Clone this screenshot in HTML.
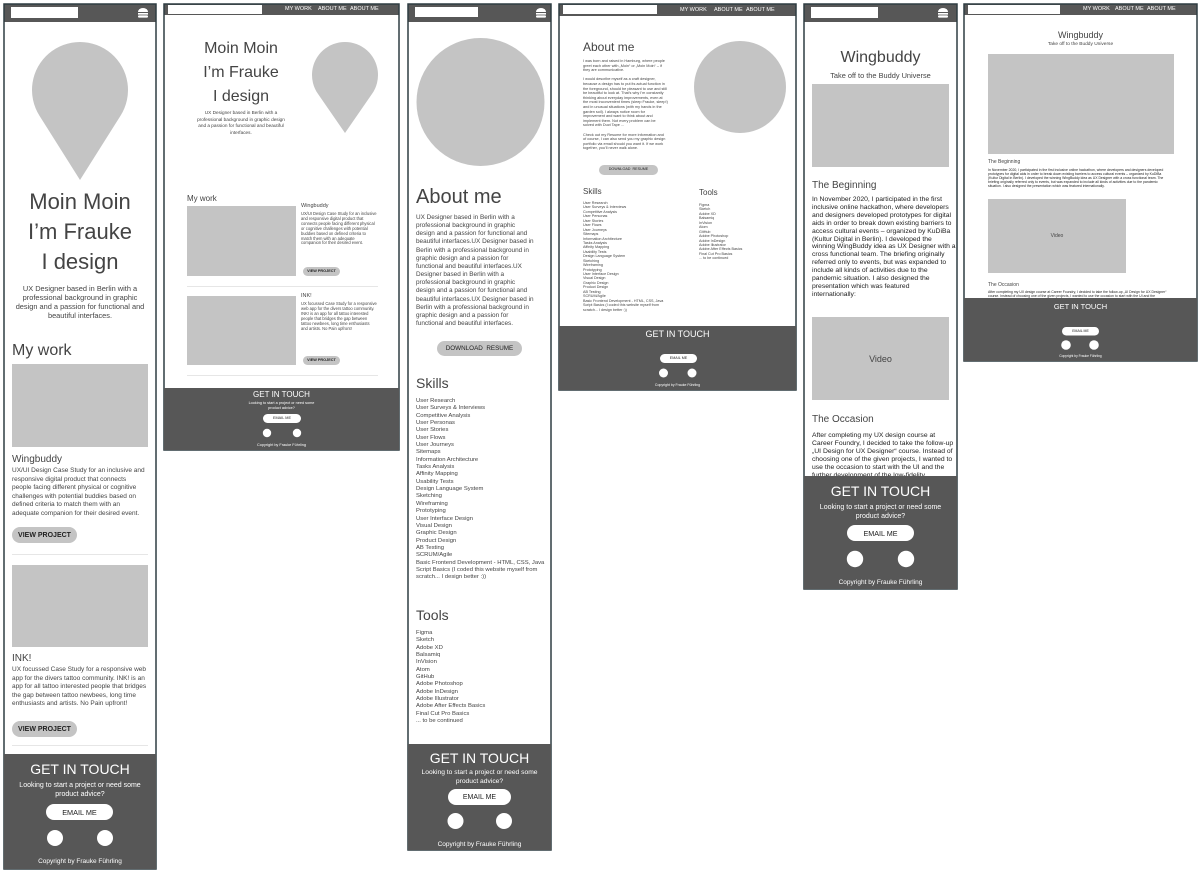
<!DOCTYPE html>
<html><head><meta charset="utf-8">
<style>
*{margin:0;padding:0;box-sizing:border-box}
body{width:1200px;height:872px;background:#fff;position:relative;overflow:hidden;font-family:"Liberation Sans",sans-serif;color:#444}
.t{position:absolute;white-space:nowrap;line-height:1}
.c{text-align:center}
.f{position:absolute;background:#575757;z-index:2}
.w{color:#fff;z-index:3}
.b{font-weight:bold}
svg.bg{position:absolute;left:0;top:0;z-index:0}
.t{z-index:1}
.w.t{z-index:3}
.k{color:#222}
</style></head><body>
<svg class="bg" width="1200" height="872" viewBox="0 0 1200 872">
<g fill="#c4c4c4">
<path d="M80 180 L39.4 115.6 A48 48 0 1 1 120.6 115.6 Z"/>
<rect x="12" y="364" width="136" height="83"/>
<rect x="12" y="565" width="136" height="82"/>
<rect x="12" y="527" width="65" height="16" rx="8"/>
<rect x="12" y="721" width="65" height="16" rx="8"/>
<path d="M345 133 L317.9 93.8 A33 33 0 1 1 372.1 93.8 Z"/>
<rect x="187" y="206" width="109" height="70"/>
<rect x="187" y="296" width="109" height="69"/>
<rect x="303" y="267" width="37" height="9" rx="4.5"/>
<rect x="303" y="356" width="37" height="9" rx="4.5"/>
<circle cx="480.5" cy="102" r="64"/>
<rect x="437" y="341" width="85" height="15" rx="7.5"/>
<circle cx="740" cy="87" r="46"/>
<rect x="599" y="165" width="59" height="10" rx="5"/>
<rect x="812" y="84" width="137" height="83"/>
<rect x="812" y="317" width="137" height="83"/>
<rect x="988" y="54" width="186" height="100"/>
<rect x="988" y="199" width="138" height="74"/>
</g>
<g stroke="#e6e6e6" stroke-width="1">
<line x1="12" y1="554.5" x2="148" y2="554.5"/>
<line x1="12" y1="745.5" x2="148" y2="745.5"/>
<line x1="187" y1="286.5" x2="378" y2="286.5"/>
<line x1="187" y1="375.5" x2="378" y2="375.5"/>
</g>
<g fill="#575757">
<rect x="4" y="4" width="152" height="18"/>
<rect x="164" y="4" width="235" height="11"/>
<rect x="408" y="4" width="143" height="18"/>
<rect x="559" y="4" width="237" height="12"/>
<rect x="804" y="4" width="153" height="18"/>
<rect x="964" y="4" width="233" height="11"/>
</g>
<g fill="#fff">
<rect x="11" y="7" width="67" height="11"/>
<rect x="168" y="5" width="94" height="9"/>
<rect x="415" y="7" width="63" height="10"/>
<rect x="563" y="5" width="94" height="9"/>
<rect x="811" y="7" width="67" height="11"/>
<rect x="968" y="5" width="92" height="9"/>
</g>
<g fill="#fff">
<g transform="translate(138,8)"><path d="M0 4 A5 4 0 0 1 10 4 Z"/><rect x="0" y="5" width="10" height="1.6"/><rect x="0" y="7.4" width="10" height="2.2" rx="1"/></g>
<g transform="translate(536,8)"><path d="M0 4 A5 4 0 0 1 10 4 Z"/><rect x="0" y="5" width="10" height="1.6"/><rect x="0" y="7.4" width="10" height="2.2" rx="1"/></g>
<g transform="translate(938,8)"><path d="M0 4 A5 4 0 0 1 10 4 Z"/><rect x="0" y="5" width="10" height="1.6"/><rect x="0" y="7.4" width="10" height="2.2" rx="1"/></g>
</g>
<g fill="none" stroke="#2f3d42" stroke-width="1.5">
<rect x="4" y="4" width="152" height="865"/>
<rect x="164" y="4" width="235" height="446"/>
<rect x="408" y="4" width="143" height="846"/>
<rect x="559" y="4" width="237" height="386"/>
<rect x="804" y="4" width="153" height="585"/>
<rect x="964" y="4" width="233" height="357"/>
</g>
</svg>

<div class="t w" style="left:285px;top:7px;font-size:5.5px">MY WORK</div>
<div class="t w" style="left:318px;top:7px;font-size:5.5px">ABOUT ME</div>
<div class="t w" style="left:350px;top:7px;font-size:5.5px">ABOUT ME</div>
<div class="t w" style="left:680px;top:7.5px;font-size:5.5px">MY WORK</div>
<div class="t w" style="left:714px;top:7.5px;font-size:5.5px">ABOUT ME</div>
<div class="t w" style="left:746px;top:7.5px;font-size:5.5px">ABOUT ME</div>
<div class="t w" style="left:1083px;top:7px;font-size:5.5px">MY WORK</div>
<div class="t w" style="left:1115px;top:7px;font-size:5.5px">ABOUT ME</div>
<div class="t w" style="left:1147px;top:7px;font-size:5.5px">ABOUT ME</div>

<!-- FRAME 1 -->
<div class="t c" style="left:4px;width:152px;top:187px;font-size:22px;line-height:30px">Moin Moin<br>I’m Frauke<br>I design</div>
<div class="t c" style="left:4px;width:152px;top:283.5px;font-size:7.4px;line-height:9px">UX Designer based in Berlin with a<br>professional background in graphic<br>design and a passion for functional and<br>beautiful interfaces.</div>
<div class="t" style="left:12px;top:343px;font-size:16px">My work</div>
<div class="t" style="left:12px;top:455px;font-size:10px">Wingbuddy</div>
<div class="t" style="left:12px;top:467px;font-size:6.5px;line-height:8.6px">UX/UI Design Case Study for an inclusive and<br>responsive digital product that connects<br>people facing different physical or cognitive<br>challenges with potential buddies based on<br>defined criteria to match them with an<br>adequate companion for their desired event.</div>
<div class="t c b" style="left:12px;width:65px;top:531.5px;font-size:7px;color:#222">VIEW PROJECT</div>
<div class="t" style="left:12px;top:654px;font-size:10px">INK!</div>
<div class="t" style="left:12px;top:666px;font-size:6.5px;line-height:8.6px">UX focussed Case Study for a responsive web<br>app for the divers tattoo community. INK! is an<br>app for all tattoo interested people that bridges<br>the gap between tattoo newbees, long time<br>enthusiasts and artists. No Pain upfront!</div>
<div class="t c b" style="left:12px;width:65px;top:725.5px;font-size:7px;color:#222">VIEW PROJECT</div>
<div class="f" style="left:4px;top:754px;width:152px;height:115px"></div>
<div class="t c w" style="left:4px;width:152px;top:762px;font-size:14px">GET IN TOUCH</div>
<div class="t c w" style="left:4px;width:152px;top:781px;font-size:7px;line-height:9px">Looking to start a project or need some<br>product advice?</div>
<svg style="position:absolute;left:0;top:0;z-index:3" width="160" height="872"><rect x="46" y="804" width="67" height="16" rx="8" fill="#fff"/><circle cx="55" cy="838" r="8" fill="#fff"/><circle cx="105" cy="838" r="8" fill="#fff"/></svg>
<div class="t c" style="left:46px;width:67px;top:808.5px;font-size:7.3px;color:#222;z-index:4">EMAIL ME</div>
<div class="t c w" style="left:4px;width:152px;top:858.5px;font-size:6.5px">Copyright by Frauke Führling</div>

<!-- FRAME 2 -->
<div class="t c" style="left:185px;width:112px;top:37px;font-size:16px;line-height:24px">Moin Moin<br>I’m Frauke<br>I design</div>
<div class="t c" style="left:185px;width:112px;top:110px;font-size:4.7px;line-height:6.5px">UX Designer based in Berlin with a<br>professional background in graphic design<br>and a passion for functional and beautiful<br>interfaces.</div>
<div class="t" style="left:187px;top:195px;font-size:8px">My work</div>
<div class="t" style="left:301px;top:204px;font-size:5.5px">Wingbuddy</div>
<div class="t" style="left:301px;top:212px;font-size:4.1px;line-height:4.9px">UX/UI Design Case Study for an inclusive<br>and responsive digital product that<br>connects people facing different physical<br>or cognitive challenges with potential<br>buddies based on defined criteria to<br>match them with an adequate<br>companion for their desired event.</div>
<div class="t c b" style="left:303px;width:37px;top:269.5px;font-size:3.8px;color:#222">VIEW PROJECT</div>
<div class="t" style="left:301px;top:294px;font-size:5.5px">INK!</div>
<div class="t" style="left:301px;top:302px;font-size:4.1px;line-height:4.9px">UX focussed Case Study for a responsive<br>web app for the divers tattoo community.<br>INK! is an app for all tattoo interested<br>people that bridges the gap between<br>tattoo newbees, long time enthusiasts<br>and artists. No Pain upfront!</div>
<div class="t c b" style="left:303px;width:37px;top:358.5px;font-size:3.8px;color:#222">VIEW PROJECT</div>
<div class="f" style="left:164px;top:388px;width:235px;height:62px"></div>
<div class="t c w" style="left:164px;width:235px;top:391px;font-size:8px">GET IN TOUCH</div>
<div class="t c w" style="left:164px;width:235px;top:401px;font-size:3.8px;line-height:5px">Looking to start a project or need some<br>product advice?</div>
<svg style="position:absolute;left:160px;top:380px;z-index:3" width="240" height="70"><rect x="103" y="34" width="38" height="9" rx="4.5" fill="#fff"/><circle cx="107" cy="53" r="4.2" fill="#fff"/><circle cx="137" cy="53" r="4.2" fill="#fff"/></svg>
<div class="t c" style="left:263px;width:38px;top:416.5px;font-size:3.8px;color:#222;z-index:4">EMAIL ME</div>
<div class="t c w" style="left:164px;width:235px;top:444px;font-size:3.8px">Copyright by Frauke Führling</div>

<!-- FRAME 3 -->
<div class="t" style="left:416px;top:187px;font-size:20px">About me</div>
<div class="t" style="left:416px;top:214px;font-size:6.4px;line-height:8.15px">UX Designer based in Berlin with a<br>professional background in graphic<br>design and a passion for functional and<br>beautiful interfaces.UX Designer based in<br>Berlin with a professional background in<br>graphic design and a passion for<br>functional and beautiful interfaces.UX<br>Designer based in Berlin with a<br>professional background in graphic<br>design and a passion for functional and<br>beautiful interfaces.UX Designer based in<br>Berlin with a professional background in<br>graphic design and a passion for<br>functional and beautiful interfaces.</div>
<div class="t c" style="left:437px;width:85px;top:345.5px;font-size:6.3px;color:#222">DOWNLOAD&nbsp; RESUME</div>
<div class="t" style="left:416px;top:376px;font-size:14px">Skills</div>
<div class="t" style="left:416px;top:398px;font-size:5.9px;line-height:7.35px">User Research<br>User Surveys &amp; Interviews<br>Competitive Analysis<br>User Personas<br>User Stories<br>User Flows<br>User Journeys<br>Sitemaps<br>Information Architecture<br>Tasks Analysis<br>Affinity Mapping<br>Usability Tests<br>Design Language System<br>Sketching<br>Wireframing<br>Prototyping<br>User Interface Design<br>Visual Design<br>Graphic Design<br>Product Design<br>AB Testing<br>SCRUM/Agile<br>Basic Frontend Development - HTML, CSS, Java<br>Script Basics (I coded this website myself from<br>scratch... I design better :))</div>
<div class="t" style="left:416px;top:608px;font-size:14px">Tools</div>
<div class="t" style="left:416px;top:630px;font-size:5.9px;line-height:7.35px">Figma<br>Sketch<br>Adobe XD<br>Balsamiq<br>InVision<br>Atom<br>GitHub<br>Adobe Photoshop<br>Adobe InDesign<br>Adobe Illustrator<br>Adobe After Effects Basics<br>Final Cut Pro Basics<br>... to be continued</div>
<div class="f" style="left:408px;top:744px;width:143px;height:106px"></div>
<div class="t c w" style="left:408px;width:143px;top:751px;font-size:14px">GET IN TOUCH</div>
<div class="t c w" style="left:408px;width:143px;top:769px;font-size:6.7px;line-height:8.5px">Looking to start a project or need some<br>product advice?</div>
<svg style="position:absolute;left:400px;top:780px;z-index:3" width="160" height="60"><rect x="48" y="9" width="63" height="16" rx="8" fill="#fff"/><circle cx="55.5" cy="41" r="8" fill="#fff"/><circle cx="104" cy="41" r="8" fill="#fff"/></svg>
<div class="t c" style="left:448px;width:63px;top:793.5px;font-size:7px;color:#222;z-index:4">EMAIL ME</div>
<div class="t c w" style="left:408px;width:143px;top:841.5px;font-size:6.5px">Copyright by Frauke Führling</div>

<!-- FRAME 4 -->
<div class="t" style="left:583px;top:41px;font-size:12px">About me</div>
<div class="t" style="left:583px;top:59px;font-size:3.8px;line-height:4.6px">I was born and raised in Hamburg, where people<br>greet each other with „Moin“ or „Moin Moin“ – if<br>they are communicative.<br><br>I would describe myself as a craft designer,<br>because a design has to put its actual function in<br>the foreground, should be pleasant to use and still<br>be beautiful to look at. That’s why I’m constantly<br>thinking about everyday improvements, even at<br>the most inconvenient times (sleep Frauke, sleep!)<br>and in unusual situations (with my hands in the<br>garden soil). I always notice room for<br>improvement and want to think about and<br>implement them. Not every problem can be<br>solved with Duct Tape ...<br><br>Check out my Resume for more information and<br>of course, I can also send you my graphic design<br>portfolio via email should you want it. If we work<br>together, you’ll never walk alone.</div>
<div class="t c" style="left:599px;width:59px;top:168px;font-size:3.7px;color:#222">DOWNLOAD&nbsp; RESUME</div>
<div class="t" style="left:583px;top:188px;font-size:8px">Skills</div>
<div class="t" style="left:583px;top:201px;font-size:3.7px;line-height:4.43px">User Research<br>User Surveys &amp; Interviews<br>Competitive Analysis<br>User Personas<br>User Stories<br>User Flows<br>User Journeys<br>Sitemaps<br>Information Architecture<br>Tasks Analysis<br>Affinity Mapping<br>Usability Tests<br>Design Language System<br>Sketching<br>Wireframing<br>Prototyping<br>User Interface Design<br>Visual Design<br>Graphic Design<br>Product Design<br>AB Testing<br>SCRUM/Agile<br>Basic Frontend Development - HTML, CSS, Java<br>Script Basics (I coded this website myself from<br>scratch... I design better :))</div>
<div class="t" style="left:699px;top:189px;font-size:8px">Tools</div>
<div class="t" style="left:699px;top:203px;font-size:3.7px;line-height:4.43px">Figma<br>Sketch<br>Adobe XD<br>Balsamiq<br>InVision<br>Atom<br>GitHub<br>Adobe Photoshop<br>Adobe InDesign<br>Adobe Illustrator<br>Adobe After Effects Basics<br>Final Cut Pro Basics<br>... to be continued</div>
<div class="f" style="left:559px;top:326px;width:237px;height:64px"></div>
<div class="t c w" style="left:559px;width:237px;top:330px;font-size:9px">GET IN TOUCH</div>
<svg style="position:absolute;left:650px;top:350px;z-index:3" width="60" height="30"><rect x="10" y="4" width="37" height="9" rx="4.5" fill="#fff"/><circle cx="13.5" cy="23" r="4.5" fill="#fff"/><circle cx="42" cy="23" r="4.5" fill="#fff"/></svg>
<div class="t c" style="left:660px;width:37px;top:356.5px;font-size:3.7px;color:#222;z-index:4">EMAIL ME</div>
<div class="t c w" style="left:559px;width:237px;top:383.5px;font-size:3.5px">Copyright by Frauke Führling</div>

<!-- FRAME 5 -->
<div class="t c" style="left:804px;width:153px;top:50px;font-size:16px">Wingbuddy</div>
<div class="t c" style="left:804px;width:153px;top:72px;font-size:7.4px">Take off to the Buddy Universe</div>
<div class="t" style="left:812px;top:181px;font-size:10px">The Beginning</div>
<div class="t k" style="left:812px;top:196px;font-size:6.8px;line-height:7.9px">In November 2020, I participated in the first<br>inclusive online hackathon, where developers<br>and designers developed prototypes for digital<br>aids in order to break down existing barriers to<br>access cultural events – organized by KuDiBa<br>(Kultur Digital in Berlin). I developed the<br>winning WingBuddy idea as UX Designer with a<br>cross functional team. The briefing originally<br>referred only to events, but was expanded to<br>include all kinds of activities due to the<br>pandemic situation. I also designed the<br>presentation which was featured<br>internationally:</div>
<div class="t c" style="left:812px;width:137px;top:355px;font-size:9px">Video</div>
<div class="t" style="left:812px;top:415px;font-size:10px">The Occasion</div>
<div class="t k" style="left:812px;top:432px;font-size:6.8px;line-height:7.9px">After completing my UX design course at<br>Career Foundry, I decided to take the follow-up<br>„UI Design for UX Designer“ course. Instead of<br>choosing one of the given projects, I wanted to<br>use the occasion to start with the UI and the<br>further development of the low-fidelity</div>
<div class="f" style="left:804px;top:476px;width:153px;height:113px"></div>
<div class="t c w" style="left:804px;width:153px;top:484px;font-size:14px">GET IN TOUCH</div>
<div class="t c w" style="left:804px;width:153px;top:504px;font-size:7px;line-height:8.5px">Looking to start a project or need some<br>product advice?</div>
<svg style="position:absolute;left:800px;top:520px;z-index:3" width="160" height="50"><rect x="47" y="5" width="67" height="16" rx="8" fill="#fff"/><circle cx="55" cy="39" r="8.2" fill="#fff"/><circle cx="106" cy="39" r="8.2" fill="#fff"/></svg>
<div class="t c" style="left:847px;width:67px;top:529.5px;font-size:7.2px;color:#222;z-index:4">EMAIL ME</div>
<div class="t c w" style="left:804px;width:153px;top:580px;font-size:6.5px">Copyright by Frauke Führling</div>

<!-- FRAME 6 -->
<div class="t c" style="left:964px;width:233px;top:31px;font-size:9px">Wingbuddy</div>
<div class="t c" style="left:964px;width:233px;top:42.5px;font-size:4.8px">Take off to the Buddy Universe</div>
<div class="t" style="left:988px;top:160px;font-size:5px">The Beginning</div>
<div class="t k" style="left:988px;top:169px;font-size:3.45px;line-height:3.9px">In November 2020, I participated in the first inclusive online hackathon, where developers and designers developed<br>prototypes for digital aids in order to break down existing barriers to access cultural events – organized by KuDiBa<br>(Kultur Digital in Berlin). I developed the winning WingBuddy idea as UX Designer with a cross functional team. The<br>briefing originally referred only to events, but was expanded to include all kinds of activities due to the pandemic<br>situation. I also designed the presentation which was featured internationally.</div>
<div class="t c" style="left:988px;width:138px;top:233.5px;font-size:5px">Video</div>
<div class="t" style="left:988px;top:282.5px;font-size:5px">The Occasion</div>
<div class="t k" style="left:988px;top:291px;font-size:3.45px;line-height:3.9px">After completing my UX design course at Career Foundry, I decided to take the follow-up „UI Design for UX Designer“<br>course. Instead of choosing one of the given projects, I wanted to use the occasion to start with the UI and the</div>
<div class="f" style="left:964px;top:298px;width:233px;height:63px"></div>
<div class="t c w" style="left:964px;width:233px;top:303px;font-size:7.5px">GET IN TOUCH</div>
<svg style="position:absolute;left:1055px;top:320px;z-index:3" width="60" height="35"><rect x="7" y="7" width="37" height="8.5" rx="4.2" fill="#fff"/><circle cx="11" cy="25" r="4.8" fill="#fff"/><circle cx="39" cy="25" r="4.8" fill="#fff"/></svg>
<div class="t c" style="left:1062px;width:37px;top:329.5px;font-size:3.5px;color:#222;z-index:4">EMAIL ME</div>
<div class="t c w" style="left:964px;width:233px;top:355px;font-size:3.3px">Copyright by Frauke Führling</div>
</body></html>
